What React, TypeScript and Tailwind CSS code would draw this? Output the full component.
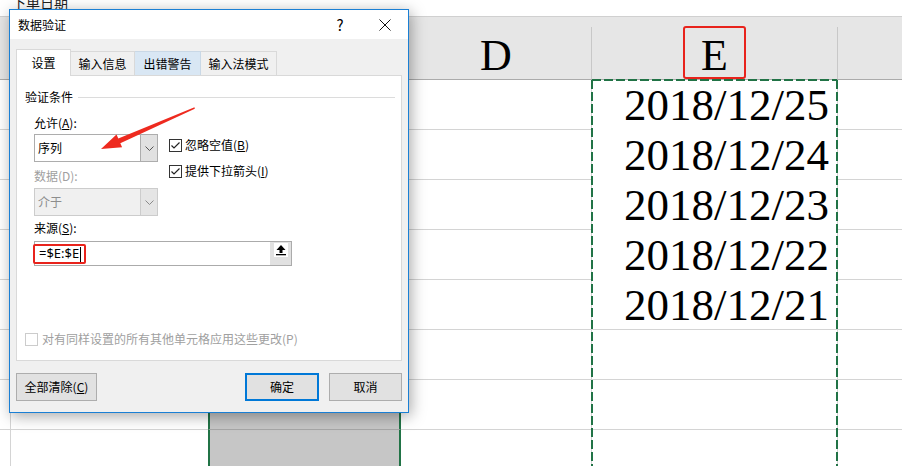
import React from 'react';

const dates = ['2018/12/25', '2018/12/24', '2018/12/23', '2018/12/22', '2018/12/21', '', '', ''];

const cols = 'grid grid-cols-[11px_197px_193px_191px_246px_1fr]';

function Check({ checked, disabled }: { checked?: boolean; disabled?: boolean }) {
  return (
    <span
      className={`w-[13px] h-[13px] shrink-0 flex items-center justify-center bg-white border ${
        disabled ? 'border-[#cccccc]' : 'border-[#333333]'
      }`}
    >
      {checked && (
        <svg width="11" height="11" viewBox="0 0 11 11">
          <path d="M1.5 5.5 L4 8 L9.5 2.5" fill="none" stroke="#222" strokeWidth="1.2" />
        </svg>
      )}
    </span>
  );
}

function Combo({ value, disabled }: { value: string; disabled?: boolean }) {
  return (
    <div
      className={`h-[28px] flex border ${
        disabled ? 'border-[#cccccc] bg-[#f0f0f0]' : 'border-[#adadad] bg-white'
      }`}
    >
      <span className={`flex-1 flex items-center pl-[3px] ${disabled ? 'text-[#8d8d8d]' : 'text-black'}`}>
        {value}
      </span>
      <span
        className={`w-[17px] flex items-center justify-center border-l ${
          disabled ? 'bg-[#e5e5e5] border-[#cccccc]' : 'bg-[#e1e1e1] border-[#adadad]'
        }`}
      >
        <svg width="9" height="5" viewBox="0 0 9 5">
          <path d="M0.5 0.5 L4.5 4.5 L8.5 0.5" fill="none" stroke={disabled ? '#8a8a8a' : '#555'} />
        </svg>
      </span>
    </div>
  );
}

function Dialog() {
  return (
    <div className="absolute left-[9px] top-[9px] w-[400px] flex flex-col border border-[#1a7fd4] bg-[#f0f0f0] shadow-[2px_3px_14px_rgba(0,0,0,0.35)] text-[12px] text-black font-['Noto_Sans_CJK_SC',sans-serif]">
      {/* title bar */}
      <div className="h-[29px] flex items-center bg-white pl-[8px] pr-[8px]">
        <span className="flex-1">数据验证</span>
        <span className="w-[20px] text-center text-[15px] leading-none">?</span>
        <span className="w-[20px]" />
        <span className="w-[30px] flex justify-center">
          <svg width="12" height="12" viewBox="0 0 12 12">
            <path d="M0.5 0.5 L11.5 11.5 M11.5 0.5 L0.5 11.5" stroke="#111" strokeWidth="1" />
          </svg>
        </span>
      </div>

      <div className="flex flex-col pt-[10px] px-[6px] pb-[11px]">
        {/* tabs */}
        <div className="flex items-end h-[27px]">
          <div className="relative z-10 w-[55px] h-[27px] flex items-center justify-center bg-white border border-b-0 border-[#d9d9d9]">
            设置
          </div>
          <div className="w-[64px] h-[25px] flex items-center justify-center border-t border-r border-[#d9d9d9]">
            输入信息
          </div>
          <div className="w-[66px] h-[25px] flex items-center justify-center bg-[#d9e7f4] border-t border-r border-[#c9d8e6]">
            出错警告
          </div>
          <div className="w-[76px] h-[25px] flex items-center justify-center border-t border-r border-[#d9d9d9]">
            输入法模式
          </div>
        </div>

        {/* panel */}
        <div className="-mt-px h-[286px] flex flex-col bg-white border border-[#d9d9d9]">
          <div className="mt-[13px] h-[16px] flex items-center gap-[5px] pl-[8px] pr-[6px]">
            <span>验证条件</span>
            <span className="flex-1 h-px bg-[#dcdcdc]" />
          </div>

          <div className="flex flex-col pl-[17px]">
            <div className="mt-[10px] h-[16px] leading-[16px]">
              允许(<u>A</u>):
            </div>
            <div className="mt-[3px] flex gap-[11px]">
              <div className="w-[124px] flex flex-col">
                <Combo value="序列" />
                <div className="mt-[6px] h-[16px] leading-[16px] text-[#a0a0a0]">数据(D):</div>
                <div className="mt-[4px]">
                  <Combo value="介于" disabled />
                </div>
              </div>
              <div className="flex flex-col">
                <label className="mt-[3px] h-[16px] flex items-center gap-[3px]">
                  <Check checked />
                  <span>
                    忽略空值(<u>B</u>)
                  </span>
                </label>
                <label className="mt-[10px] h-[16px] flex items-center gap-[3px]">
                  <Check checked />
                  <span>
                    提供下拉箭头(<u>I</u>)
                  </span>
                </label>
              </div>
            </div>
            <div className="mt-[4px] h-[16px] leading-[16px]">
              来源(<u>S</u>):
            </div>
            <div className="mt-[5px] w-[258px] h-[25px] flex border border-[#ababab] bg-white">
              <div className="flex-1 flex items-start">
                <div className="-ml-[2px] mt-[2px] w-[53px] h-[20px] flex items-center pl-[4px] border-2 border-[#e8231c] rounded-[2px] font-['Noto_Sans',sans-serif] text-[13px]">
                  <span>=$E:$E</span>
                  <span className="ml-px w-px h-[15px] bg-black" />
                </div>
              </div>
              <div className="w-[21px] bg-[#e1e1e1] flex justify-center pt-[1px]">
                <div className="w-[14px] h-[14px] bg-white flex items-center justify-center">
                  <svg width="12" height="12" viewBox="0 0 12 12">
                    <polygon points="6,1 1.5,6 10.5,6" fill="#000" />
                    <rect x="4.5" y="5.5" width="3" height="3.5" fill="#000" />
                    <rect x="1" y="10" width="10" height="1.3" fill="#000" />
                  </svg>
                </div>
              </div>
            </div>
          </div>

          <div className="mt-auto mb-[13px] h-[16px] flex items-center gap-[4px] pl-[8px] text-[#a0a0a0]">
            <Check disabled />
            <span>对有同样设置的所有其他单元格应用这些更改(P)</span>
          </div>
        </div>

        {/* buttons */}
        <div className="mt-[12px] flex">
          <button className="w-[81px] h-[28px] bg-[#e1e1e1] border border-[#adadad]">
            全部清除(<u>C</u>)
          </button>
          <span className="flex-1" />
          <button className="w-[74px] h-[28px] bg-[#e1e1e1] border-2 border-[#0078d7]">确定</button>
          <button className="ml-[10px] w-[73px] h-[28px] bg-[#e1e1e1] border border-[#adadad]">取消</button>
        </div>
      </div>
    </div>
  );
}

export default function App() {
  return (
    <div className="relative w-[902px] h-[466px] overflow-hidden bg-white">
      {/* top strip: cell text cut off by the window edge */}
      <div className="h-[17px] flex items-start border-b border-[#d0d0d0] pl-[12px] font-['Noto_Sans_CJK_SC',sans-serif] text-[14px] leading-[14px]">
        <div className="-mt-[5px] text-[#222]">下单日期</div>
      </div>

      {/* column header */}
      <div className={`${cols} h-[63px] bg-[#e6e6e6] border-b border-[#ababab] font-['Liberation_Serif',serif] text-[44px] leading-none text-black`}>
        <div />
        <div />
        <div />
        <div className="flex">
          <div className="flex-1 flex justify-center pt-[17px]">D</div>
          <div className="w-px mt-[10px] bg-[#c8c8c8]" />
        </div>
        <div className="flex">
          <div className="flex-1 flex justify-center items-end">
            <div className="w-[63px] h-[53px] flex justify-center pt-[6px] border-2 border-[#e8231c] rounded-[3px]">
              E
            </div>
          </div>
          <div className="w-px mt-[10px] bg-[#c8c8c8]" />
        </div>
        <div />
      </div>

      {/* rows */}
      {dates.map((d, i) => (
        <div key={i} className={`${cols} h-[50px]`}>
          <div className="border-r border-b border-[#d4d4d4]" />
          <div className="border-b border-[#d4d4d4]" />
          <div className="bg-[#c6c6c6] border-x-2 border-x-[#217346] border-b border-b-[#a6a6a6]" />
          <div className="border-r border-b border-[#d4d4d4]" />
          <div
            className={`flex items-end justify-end pr-[8px] pb-[1px] border-r border-r-[#d4d4d4] border-b ${
              i < 4 ? 'border-b-white' : 'border-b-[#d4d4d4]'
            } font-['Liberation_Serif',serif] text-[45px] leading-none text-black`}
          >
            {d}
          </div>
          <div className="border-b border-[#d4d4d4]" />
        </div>
      ))}

      {/* copy marquee around column E */}
      <svg className="absolute left-[591px] top-[79px] pointer-events-none" width="248" height="390">
        <g stroke="#217346" strokeWidth="2" strokeDasharray="9 3" fill="none">
          <line x1="1" y1="1" x2="1" y2="390" />
          <line x1="246" y1="1" x2="246" y2="390" />
          <line x1="1" y1="1" x2="246" y2="1" />
        </g>
      </svg>

      <Dialog />

      {/* red arrow annotation */}
      <svg className="absolute left-0 top-0 pointer-events-none" width="902" height="466">
        <polygon
          points="194.5,107.3 118.3,138.6 116.5,134.5 101,149 122.1,147.3 120.3,143.2 194.8,108.8"
          fill="#ee2a1f"
        />
      </svg>
    </div>
  );
}
